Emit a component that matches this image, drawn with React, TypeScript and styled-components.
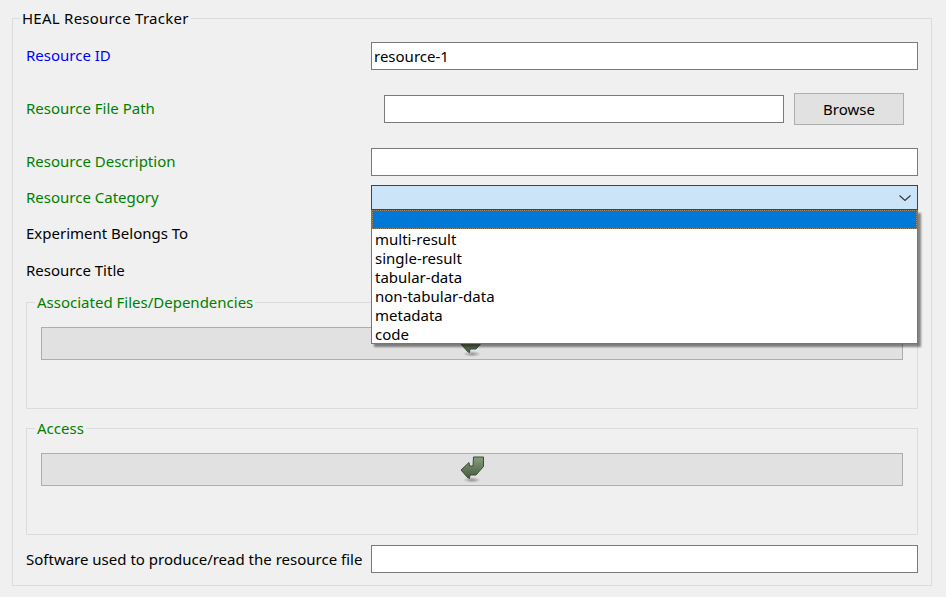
import React from "react";
import styled, { createGlobalStyle } from "styled-components";

const Global = createGlobalStyle`
  html, body { margin: 0; padding: 0; background: #f0f0f0; }
  body { font-family: "Noto Sans", "Open Sans", sans-serif; font-size: 15px; color: #000; }
  * { box-sizing: border-box; }
`;

const Page = styled.div`
  width: 946px;
  height: 597px;
  padding: 18px 14px 11px 12px;
  overflow: hidden;
`;

const OuterGroup = styled.div`
  position: relative;
  height: 568px;
  border: 1px solid #dcdcdc;
  padding: 23px 13px 0 13px;
`;

const GroupTitle = styled.span<{ $color?: string; $left?: number; $wide?: boolean }>`
  position: absolute;
  left: ${(p) => p.$left ?? 7}px;
  top: -11px;
  padding: 0 2px;
  line-height: 20px;
  background: #f0f0f0;
  letter-spacing: ${(p) => (p.$wide ? "0.25px" : "0")};
  color: ${(p) => p.$color || "#000"};
`;

const Row = styled.div<{ $height: number; $gap: number }>`
  display: flex;
  align-items: center;
  height: ${(p) => p.$height}px;
  margin-bottom: ${(p) => p.$gap}px;
`;

const Label = styled.label<{ $color?: string; $flush?: boolean }>`
  flex: 0 0 345px;
  padding-bottom: ${(p) => (p.$flush ? 0 : 2)}px;
  color: ${(p) => p.$color || "#000"};
  white-space: nowrap;
`;

const Input = styled.div<{ $indent?: number; $width?: number }>`
  flex: ${(p) => (p.$width ? `0 0 ${p.$width}px` : "1")};
  margin-left: ${(p) => p.$indent || 0}px;
  height: 28px;
  line-height: 26px;
  padding-left: 2px;
  background: #fff;
  border: 1px solid #7a7a7a;
`;

const Button = styled.div`
  flex: 0 0 110px;
  height: 32px;
  margin-left: 10px;
  background: #e1e1e1;
  border: 1px solid #adadad;
  display: flex;
  align-items: center;
  justify-content: center;
`;

const ComboWrap = styled.div`
  position: relative;
  flex: 1;
  height: 25px;
`;

const ComboField = styled.div`
  height: 25px;
  background: #cce4f7;
  border: 1px solid #005499;
  display: flex;
  align-items: center;
  justify-content: flex-end;
  padding-right: 6px;
`;

const Popup = styled.div`
  position: absolute;
  left: 0;
  right: 0;
  top: 25px;
  height: 134px;
  background: #fff;
  border: 1px solid #767676;
  border-top: 0;
  box-shadow: 3px 3px 2px rgba(0, 0, 0, 0.45);
  z-index: 2;
`;

const Option = styled.div<{ $selected?: boolean }>`
  height: 19px;
  line-height: 21px;
  padding-left: 3px;
  white-space: nowrap;
  background: ${(p) => (p.$selected ? "#0078d7" : "transparent")};
  outline: ${(p) => (p.$selected ? "1px dotted #9a8a6a" : "none")};
  outline-offset: -1px;
`;

const SubGroup = styled.div<{ $gap: number }>`
  position: relative;
  height: 107px;
  margin-bottom: ${(p) => p.$gap}px;
  border: 1px solid #dcdcdc;
  padding: 24px 14px 0 14px;
`;

const AddButton = styled.div`
  height: 33px;
  background: #e1e1e1;
  border: 1px solid #adadad;
  display: flex;
  align-items: center;
  justify-content: center;
`;

const Chevron = () => (
  <svg width="12" height="6" viewBox="0 0 12 6" fill="none">
    <path d="M0.5 0.5 L6 5.5 L11.5 0.5" stroke="#333" strokeWidth="1.1" />
  </svg>
);

const ArrowIcon = ({ id }: { id: string }) => (
  <svg width="26" height="28" viewBox="-1 0 26 28" style={{ marginTop: 1 }}>
    <defs>
      <linearGradient id={id} x1="0" y1="0" x2="0" y2="1">
        <stop offset="0" stopColor="#86a07c" />
        <stop offset="1" stopColor="#47583f" />
      </linearGradient>
      <radialGradient id={id + "s"}>
        <stop offset="0" stopColor="#000" stopOpacity="0.35" />
        <stop offset="1" stopColor="#000" stopOpacity="0" />
      </radialGradient>
    </defs>
    <ellipse cx="12" cy="24" rx="9" ry="3" fill={`url(#${id}s)`} />
    <path
      d="M1 14 L9 6.5 L9.5 10 L13 10 L13.5 1 L23.5 1 L23.5 10.5 L16 19 L10 19 L9.5 22.5 L7.5 21.5 Z"
      fill={`url(#${id})`}
      stroke="#3d4a37"
      strokeWidth="1"
      strokeLinejoin="round"
    />
  </svg>
);

const options = ["", "multi-result", "single-result", "tabular-data", "non-tabular-data", "metadata", "code"];

export default function App() {
  return (
    <Page>
      <Global />
      <OuterGroup>
        <GroupTitle $wide>HEAL Resource Tracker</GroupTitle>
        <Row $height={28} $gap={23}>
          <Label $color="#0000ff">Resource ID</Label>
          <Input>resource-1</Input>
        </Row>
        <Row $height={32} $gap={23}>
          <Label $color="#008000">Resource File Path</Label>
          <Input $indent={13} $width={400} />
          <Button>Browse</Button>
        </Row>
        <Row $height={28} $gap={9}>
          <Label $color="#008000">Resource Description</Label>
          <Input />
        </Row>
        <Row $height={25} $gap={10}>
          <Label $color="#008000">Resource Category</Label>
          <ComboWrap>
            <ComboField>
              <Chevron />
            </ComboField>
            <Popup>
              {options.map((o, i) => (
                <Option key={i} $selected={i === 0}>
                  {o}
                </Option>
              ))}
            </Popup>
          </ComboWrap>
        </Row>
        <Row $height={28} $gap={9}>
          <Label>Experiment Belongs To</Label>
        </Row>
        <Row $height={28} $gap={17}>
          <Label>Resource Title</Label>
        </Row>
        <SubGroup $gap={19}>
          <GroupTitle $color="#008000" $left={8}>Associated Files/Dependencies</GroupTitle>
          <AddButton>
            <ArrowIcon id="a" />
          </AddButton>
        </SubGroup>
        <SubGroup $gap={10}>
          <GroupTitle $color="#008000" $left={8}>Access</GroupTitle>
          <AddButton>
            <ArrowIcon id="b" />
          </AddButton>
        </SubGroup>
        <Row $height={28} $gap={0}>
          <Label $flush>Software used to produce/read the resource file</Label>
          <Input />
        </Row>
      </OuterGroup>
    </Page>
  );
}
